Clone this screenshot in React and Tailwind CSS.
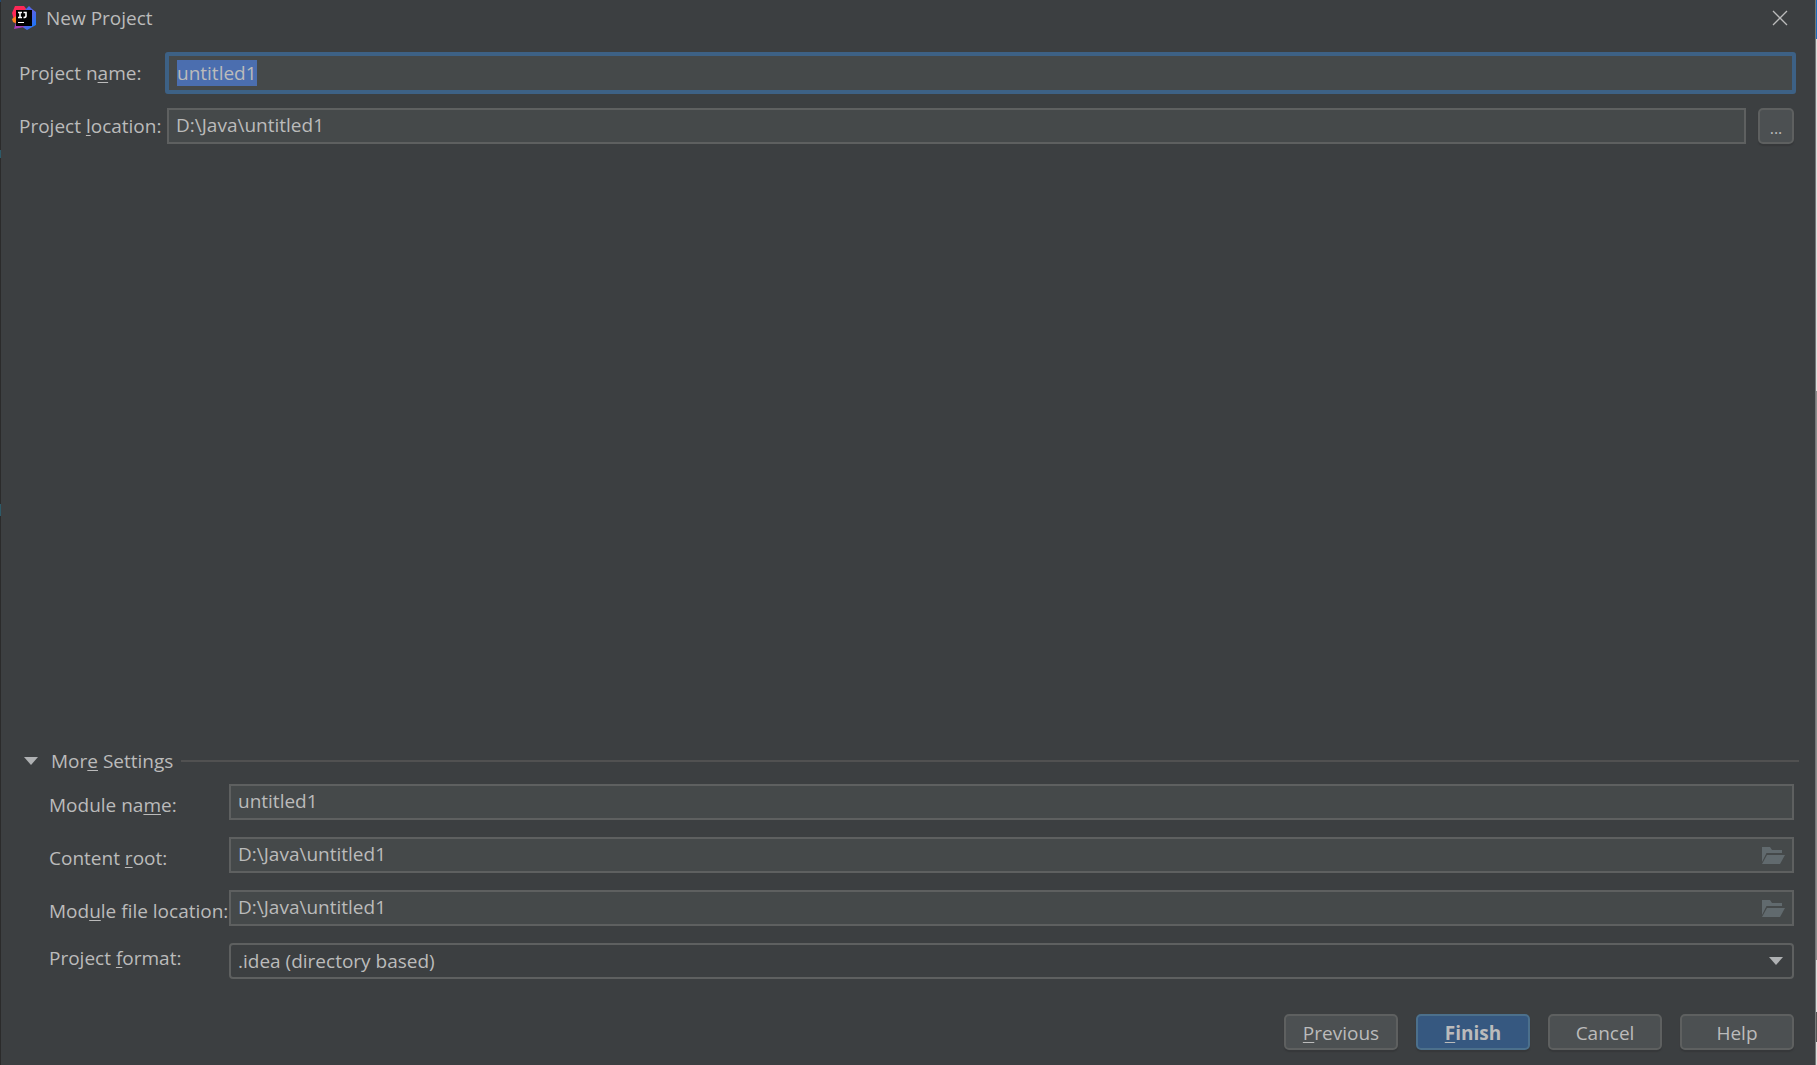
import { useEffect, useRef, useState } from "react";

const fieldClass =
    "h-9 w-full min-w-0 border-2 border-[#5e6060] bg-[#45494a] px-[7px] pb-[2px] leading-6 text-[#bbbbbb] outline-none";

const buttonClass =
    "h-9 w-[114px] rounded-[5px] border-2 border-[#5e6060] bg-[#4c5052] pt-[2px] leading-6 text-[#bbbbbb] shadow-[0_2px_1px_#36383a]";

const Mnemonic = ({ children }) => (
    <span className="underline decoration-1 underline-offset-2">{children}</span>
);

const AppLogo = () => (
    <svg width="24" height="24" viewBox="0 0 24 24" aria-hidden="true">
        <defs>
            <linearGradient id="logoBlue" x1="0" y1="0" x2="1" y2="1">
                <stop offset="0" stopColor="#3b6cf5" />
                <stop offset="0.5" stopColor="#5b62e4" />
                <stop offset="1" stopColor="#087cfa" />
            </linearGradient>
        </defs>
        <path d="M3 0h9l3 4-3 10H2L0 7z" fill="#fe2857" />
        <path d="M4 10l-4 3 1 3 4 2z" fill="#fc801d" />
        <path d="M13 4l4-4 3 3 4 3v13l-9 5-6-4z" fill="url(#logoBlue)" />
        <path d="M4 16l-2 7 10-2-3-4z" fill="#a83bb8" />
        <path d="M4 4h16v16H4z" fill="#000000" />
        <path
            d="M6 6.500h4M8 6v6M6 11.500h4M11.500 6.500H14V10c0 1-.5 1.500-2.500 1.500"
            fill="none"
            stroke="#ffffff"
            strokeWidth="1.600"
        />
        <path d="M6 16h6v1H6z" fill="#ffffff" />
    </svg>
);

const FolderIcon = () => (
    <svg width="23" height="18" viewBox="0 0 23 18" fill="#616a6e" aria-hidden="true">
        <path d="M0 0h8l2 3h10v3H4.500L0 15z" />
        <path d="M5 8h18l-5 9H0z" />
    </svg>
);

const Arrow = () => (
    <svg width="14" height="8" viewBox="0 0 14 8" fill="#afb1b3" aria-hidden="true">
        <path d="M0 0h14L7 8z" />
    </svg>
);

// slivers of the windows behind the dialog
const LeftEdge = () => (
    <div className="flex w-px flex-col bg-[#2b2b2b]" aria-hidden="true">
        <div className="h-[2px] bg-[#214a72]" />
        <div className="mt-[148px] h-2 bg-[#2d5a68]" />
        <div className="mt-[346px] h-3 bg-[#2d5a68]" />
    </div>
);

const RightEdge = () => (
    <div className="flex w-[2px] flex-col border-l border-[#77797a] bg-[#dedede]" aria-hidden="true">
        <div className="h-[39px] bg-[#1b6dbf]" />
        <div className="h-[352px]" />
        <div className="flex-1 bg-[#8c8c8c]" />
        <div className="h-[52px]" />
        <div className="h-[30px] bg-[#555555]" />
        <div className="h-[23px]" />
    </div>
);

const App = () => {
    const [name, setName] = useState("untitled1");
    const [location, setLocation] = useState("D:\\Java\\untitled1");
    const [moduleName, setModuleName] = useState("untitled1");
    const [contentRoot, setContentRoot] = useState("D:\\Java\\untitled1");
    const [moduleFile, setModuleFile] = useState("D:\\Java\\untitled1");
    const nameRef = useRef(null);

    useEffect(() => {
        nameRef.current.focus();
        nameRef.current.select();
    }, []);

    return (
        <div className="flex min-h-screen bg-[#3c3f41] font-['Open_Sans','Noto_Sans',sans-serif] text-[19px] leading-6 text-[#bbbbbb]">
            <LeftEdge />
            <main className="flex min-w-0 flex-1 flex-col">
                <header className="flex h-9 items-center pr-[27px] pl-[11px]">
                    <AppLogo />
                    <h1 className="ml-[10px] flex-1 leading-6">New Project</h1>
                    <button type="button" aria-label="Close">
                        <svg width="16" height="16" viewBox="0 0 16 16" stroke="#bbbbbb" strokeWidth="1.300">
                            <path d="M1 1l14 14M15 1L1 15" />
                        </svg>
                    </button>
                </header>

                <form className="flex flex-1 flex-col pb-[15px]" onSubmit={(e) => e.preventDefault()}>
                    <div className="mt-4 grid grid-cols-[146px_1fr] items-center gap-y-[14px] pr-[19px] pl-[18px]">
                        <label htmlFor="name">
                            Project n<Mnemonic>a</Mnemonic>me:
                        </label>
                        <input
                            id="name"
                            ref={nameRef}
                            value={name}
                            onChange={(e) => setName(e.target.value)}
                            className="h-[42px] rounded-[3px] border-4 border-[#3d6185] bg-[#45494a] px-2 leading-6 text-[#bbbbbb] outline-none selection:bg-[#4b6eaf] selection:text-[#bbbbbb]"
                        />
                        <label htmlFor="location">
                            Project <Mnemonic>l</Mnemonic>ocation:
                        </label>
                        <div className="flex gap-3 px-[2px]">
                            <input
                                id="location"
                                value={location}
                                onChange={(e) => setLocation(e.target.value)}
                                className={fieldClass}
                            />
                            <button
                                type="button"
                                aria-label="Browse"
                                className="h-9 w-9 shrink-0 rounded-[5px] border-2 border-[#5e6060] bg-[#4c5052] pt-1 text-base shadow-[0_2px_1px_#36383a]"
                            >
                                ...
                            </button>
                        </div>
                    </div>

                    <div className="mt-auto flex items-center pr-4 pl-[23px]">
                        <button type="button" className="flex items-center gap-[13px] leading-6">
                            <Arrow />
                            <span>
                                Mor<Mnemonic>e</Mnemonic> Settings
                            </span>
                        </button>
                        <div className="ml-2 h-[2px] flex-1 bg-[#515151]" />
                    </div>

                    <div className="mt-[11px] grid grid-cols-[180px_1fr] items-center gap-y-[17px] pr-[21px] pl-12">
                        <label htmlFor="moduleName" className="pt-[6px]">
                            Module na<Mnemonic>m</Mnemonic>e:
                        </label>
                        <input
                            id="moduleName"
                            value={moduleName}
                            onChange={(e) => setModuleName(e.target.value)}
                            className={fieldClass}
                        />
                        <label htmlFor="contentRoot" className="pt-[6px]">
                            Content <Mnemonic>r</Mnemonic>oot:
                        </label>
                        <div className="relative">
                            <input
                                id="contentRoot"
                                value={contentRoot}
                                onChange={(e) => setContentRoot(e.target.value)}
                                className={fieldClass}
                            />
                            <button type="button" aria-label="Browse content root" className="absolute top-[10px] right-[9px]">
                                <FolderIcon />
                            </button>
                        </div>
                        <label htmlFor="moduleFile" className="pt-[6px] whitespace-nowrap">
                            Mod<Mnemonic>u</Mnemonic>le file location:
                        </label>
                        <div className="relative">
                            <input
                                id="moduleFile"
                                value={moduleFile}
                                onChange={(e) => setModuleFile(e.target.value)}
                                className={fieldClass}
                            />
                            <button type="button" aria-label="Browse module file location" className="absolute top-[10px] right-[9px]">
                                <FolderIcon />
                            </button>
                        </div>
                        <label htmlFor="format" className="pb-[6px]">
                            Project <Mnemonic>f</Mnemonic>ormat:
                        </label>
                        <div className="relative">
                            <select
                                id="format"
                                className="h-9 w-full appearance-none rounded-[4px] border-2 border-[#5e6060] bg-[#3c3f41] px-[7px] leading-6 text-[#bbbbbb] outline-none"
                            >
                                <option>.idea (directory based)</option>
                            </select>
                            <span className="pointer-events-none absolute top-[14px] right-[11px]">
                                <Arrow />
                            </span>
                        </div>
                    </div>

                    <footer className="mt-[35px] flex justify-end gap-[18px] pr-[21px]">
                        <button type="button" className={buttonClass}>
                            <Mnemonic>P</Mnemonic>revious
                        </button>
                        <button
                            type="submit"
                            className="h-9 w-[114px] rounded-[5px] border-2 border-[#4c708c] bg-[#365880] pt-[2px] leading-6 font-bold text-[#bbbbbb] shadow-[0_2px_1px_#36383a]"
                        >
                            <Mnemonic>F</Mnemonic>inish
                        </button>
                        <button type="button" className={buttonClass}>
                            Cancel
                        </button>
                        <button type="button" className={buttonClass}>
                            Help
                        </button>
                    </footer>
                </form>
            </main>
            <RightEdge />
        </div>
    );
};

export default App;
